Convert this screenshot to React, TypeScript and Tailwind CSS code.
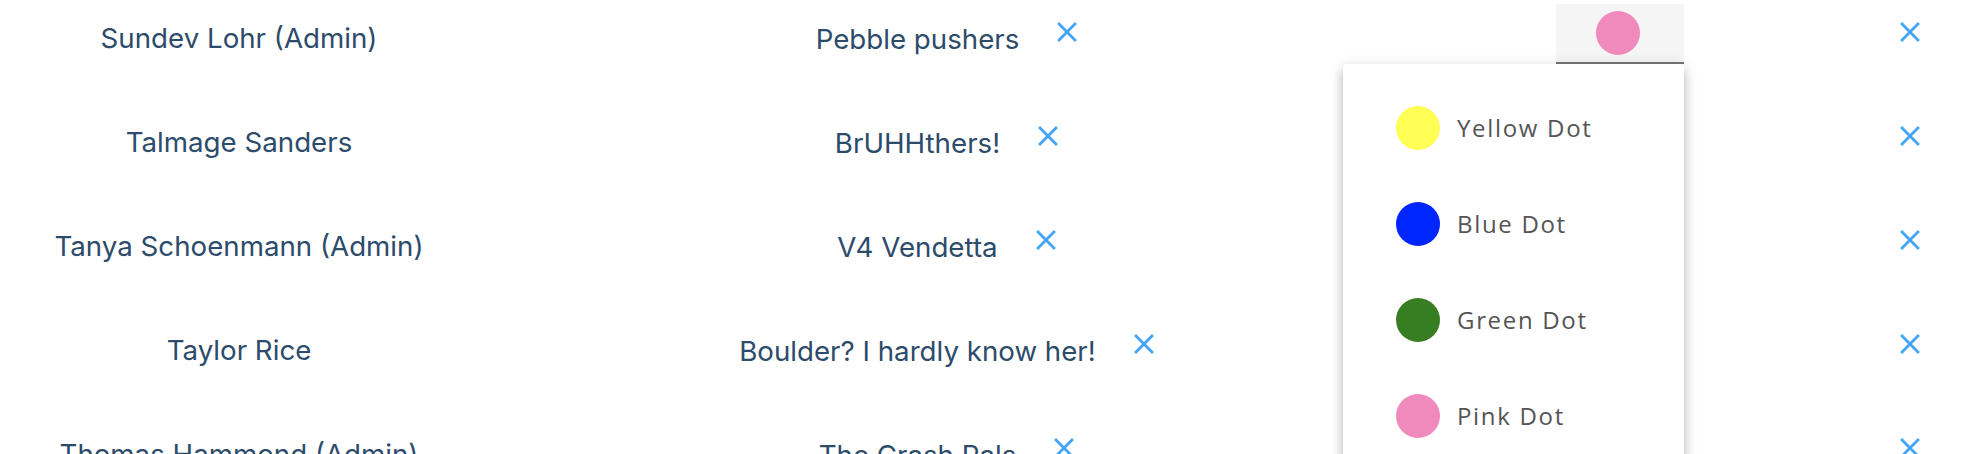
import React from "react"

const members = [
  { name: "Sundev Lohr (Admin)", team: "Pebble pushers", dot: "#f08abd" },
  { name: "Talmage Sanders", team: "BrUHHthers!", dot: "#f08abd" },
  { name: "Tanya Schoenmann (Admin)", team: "V4 Vendetta", dot: "#f08abd" },
  { name: "Taylor Rice", team: "Boulder? I hardly know her!", dot: "#f08abd" },
  { name: "Thomas Hammond (Admin)", team: "The Crash Pals", dot: "#f08abd" },
]

const dots = [
  { label: "Yellow Dot", color: "#ffff55" },
  { label: "Blue Dot", color: "#0026ff" },
  { label: "Green Dot", color: "#377d22" },
  { label: "Pink Dot", color: "#f08abd" },
]

function CloseIcon() {
  return (
    <svg viewBox="0 0 24 24" className="w-[34px] h-[34px] fill-[#42a5f5]">
      <path d="M19 6.41 17.59 5 12 10.59 6.41 5 5 6.41 10.59 12 5 17.59 6.41 19 12 13.41 17.59 19 19 17.59 13.41 12z" />
    </svg>
  )
}

function DotMenu() {
  return (
    <div className="absolute right-0 top-full z-10 w-[341px] rounded-[4px] bg-white py-4 shadow-[0_5px_5px_-3px_rgba(0,0,0,0.2),0_8px_10px_1px_rgba(0,0,0,0.14),0_3px_14px_2px_rgba(0,0,0,0.12)]">
      {dots.map((d) => (
        <div key={d.label} className="flex h-[96px] items-center pl-[53px]">
          <div className="h-[44px] w-[44px] rounded-full" style={{ background: d.color }} />
          <span className="ml-[17px] font-['Open_Sans',sans-serif] text-[24px] tracking-[0.07em] text-[#555555]">
            {d.label}
          </span>
        </div>
      ))}
    </div>
  )
}

export default function App() {
  return (
    <div className="h-[454px] w-full overflow-hidden bg-white font-['Inter',sans-serif] text-[27.7px] text-[#2d4b6b]">
      <div className="-mt-[18px]">
        {members.map((m, i) => (
          <div key={m.name} className="flex h-[104px] items-center">
            {/* Name */}
            <div className="mt-[10px] flex w-[478px] justify-center">
              <span>{m.name}</span>
            </div>

            {/* Team */}
            <div className="mt-[10px] flex w-[944px] justify-center">
              <div className="flex items-start">
                <span className="leading-[42px]">{m.team}</span>
                <button aria-label="Remove team" className="ml-[31px] -mt-[3px]">
                  <CloseIcon />
                </button>
              </div>
            </div>

            {/* Dot select */}
            <div className="flex w-[262px] justify-end">
              <div className="relative">
                <div className="flex h-[60px] w-[128px] items-center justify-center border-b-2 border-[#767676] bg-[#f5f5f5] pr-1">
                  <div className="h-[44px] w-[44px] rounded-full" style={{ background: m.dot }} />
                </div>
                {i === 0 && <DotMenu />}
              </div>
            </div>

            {/* Remove member */}
            <div className="flex flex-1 pl-[209px]">
              <button aria-label="Remove member" className="-mt-1">
                <CloseIcon />
              </button>
            </div>
          </div>
        ))}
      </div>
    </div>
  )
}
